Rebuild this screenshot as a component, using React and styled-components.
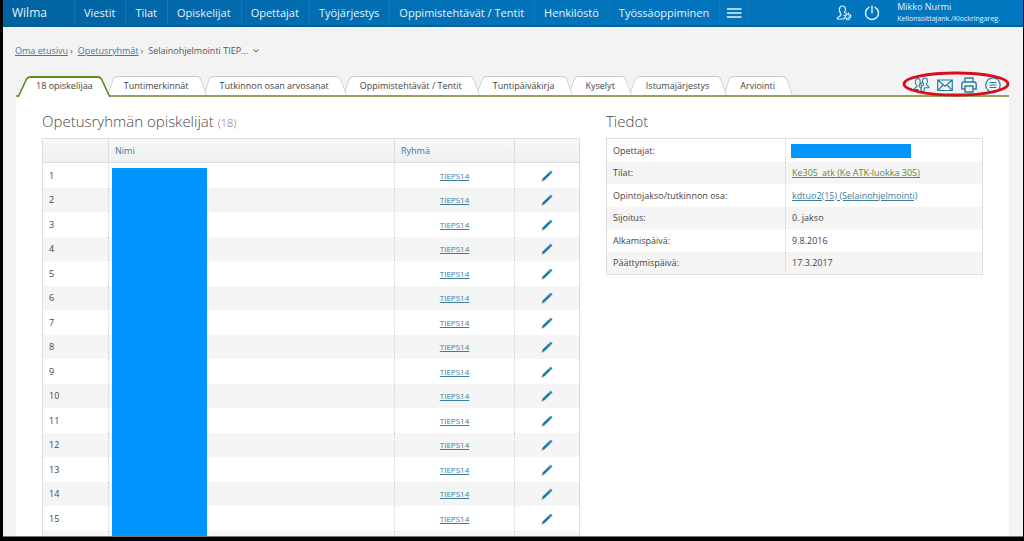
import React from "react";
import styled, { createGlobalStyle } from "styled-components";

const Global = createGlobalStyle`
  *, *::before, *::after { box-sizing: border-box; }
  body { margin: 0; background: #000; font-family: "Open Sans", "Liberation Sans", sans-serif; color: #555; font-size: 9px; line-height: 12px; }
  a { color: #3c7d9e; text-decoration: underline; }
`;

const Screen = styled.div`
  height: 100vh;
  padding: 0 1px 4px 3px;
  display: flex;
  flex-direction: column;
  background: #000;
`;

const Page = styled.div`
  flex: 1;
  min-height: 0;
  overflow: hidden;
  background: #f3f3f3;
  border-bottom: 1px solid #777;
`;

const TopBar = styled.header`
  display: flex;
  height: 27px;
  background: linear-gradient(90deg, #0262a0 0%, #0272b8 45%, #0077c0 100%);
  border-bottom: 2px solid #025f98;
  color: #e4f3fc;
`;

const Brand = styled.a`
  width: 72px;
  padding-left: 9px;
  font-size: 12px;
  line-height: 26px;
  && { color: inherit; text-decoration: none; }
  border-right: 1px solid #1272ae;
`;

const Nav = styled.nav`
  display: flex;
  flex: 1;
`;

const NavLink = styled.a`
  padding: 0 10px 0 9px;
  font-size: 11px;
  line-height: 26px;
  border-right: 1px solid #127abb;
  && { color: inherit; text-decoration: none; }
`;

const BarButton = styled.button`
  border: 0;
  background: none;
  color: inherit;
  padding: 0 6px;
  display: flex;
  align-items: center;
  border-right: ${(p) => (p.$ruled ? "1px solid #127abb" : "0")};
`;

const Session = styled.div`
  display: flex;
  padding-right: 23px;
`;

const User = styled.div`
  margin-left: 11px;
  padding-top: 1px;
  font-size: 9px;
  white-space: nowrap;
`;

const Role = styled.div`
  font-size: 7px;
`;

const Crumbs = styled.nav`
  display: flex;
  align-items: flex-start;
  gap: 2px;
  height: 49px;
  padding: 18px 12px 0;
  color: #555;
`;

const CrumbMark = styled.span`
  margin-right: 3px;
`;

const Crumb = styled.span`
  display: flex;
  align-items: center;
  gap: 5px;
`;

const Content = styled.main`
  margin: 0 14px 0 13px;
`;

const TabBar = styled.div`
  display: flex;
  height: 21px;
  border-bottom: 2px solid #8da561;
`;

const Tab = styled.button`
  position: relative;
  isolation: isolate;
  z-index: ${(p) => p.$layer};
  height: ${(p) => (p.$active ? 21 : 19)}px;
  margin: 0;
  padding: 1px 17px 0 ${(p) => (p.$active ? 20 : 14)}px;
  border: 0;
  background: none;
  font: inherit;
  line-height: 18px;
  color: #444;
  white-space: nowrap;
  display: flex;

  &::before, &::after {
    content: "";
    position: absolute;
    z-index: -1;
    top: 0;
    bottom: 0;
    background: #fff;
    border: ${(p) => (p.$active ? "2px solid #5f8f22" : "1px solid #c8c8c8")};
    border-bottom: 0;
  }
  &::before {
    left: ${(p) => (p.$active ? 1 : -3)}px;
    right: 20px;
    border-right: 0;
    border-top-left-radius: 4px;
    transform-origin: 0 100%;
    transform: skewX(${(p) => (p.$active ? -25 : -20)}deg);
  }
  &::after {
    right: -1px;
    left: 30px;
    border-left: 0;
    border-top-right-radius: 4px;
    transform-origin: 100% 100%;
    transform: skewX(${(p) => (p.$active ? 25 : 20)}deg);
  }
`;

const Tools = styled.div`
  position: relative;
  margin-left: auto;
  padding-right: 7px;
  display: flex;
  gap: 6px;
  color: #23819f;
`;

const Tool = styled.button`
  border: 0;
  padding: 0;
  background: none;
  color: inherit;
  width: 18px;
  height: 17px;
  display: flex;
  justify-content: center;
  align-items: center;
`;

const Highlight = styled.svg`
  position: absolute;
  right: -2px;
  top: -6px;
  pointer-events: none;
`;

const Panel = styled.div`
  background: #fff;
  padding: 14px 26px 0;
  display: grid;
  grid-template-columns: 538fr 377fr;
  column-gap: 26px;
  align-items: start;
`;

const Title = styled.h2`
  height: 20px;
  margin: 0 0 7px;
  font-size: 15px;
  line-height: 20px;
  font-weight: 300;
  color: #4a4a4a;
`;

const Count = styled.small`
  font-size: 11px;
  line-height: 12px;
  color: #777;
`;

const TableFrame = styled.div`
  position: relative;
`;

const Table = styled.table`
  width: 100%;
  table-layout: fixed;
  border-collapse: separate;
  border-spacing: 0;
  border: 1px solid #ddd;
  color: #444;

  th, td {
    padding: 0 6px;
    text-align: left;
    font-weight: 400;
    border-left: 1px dotted #d2d2d2;
  }
  th:first-child, td:first-child { border-left: 0; }
  tbody tr:nth-child(even) { background: #f5f5f5; }
`;

const StudentTable = styled(Table)`
  thead th {
    height: 24px;
    color: #3c78a0;
    background: linear-gradient(#f8f8f8, #efefef);
    border-bottom: 1px solid #ddd;
    border-left: 1px solid #ddd;
  }
  tbody td { height: 25px; }
  tbody tr:nth-child(even) td { height: 24px; }
`;

const InfoTable = styled(Table)`
  th, td { height: 23px; }
  tr:nth-child(even) th, tr:nth-child(even) td { height: 22px; }
`;

const Col = styled.col`
  width: ${(p) => p.$w}px;
`;

const Centered = styled.td`
  && { text-align: center; }
`;

const GroupLink = styled.a`
  font-size: 8px;
`;

const RoomLink = styled.a`
  && { color: #66882f; }
`;

const EditButton = styled.button`
  border: 0;
  padding: 0;
  background: none;
  color: #1878a8;
  display: block;
  margin: 0 auto;
`;

const NameCover = styled.div`
  position: absolute;
  left: 70px;
  top: 30px;
  bottom: 0;
  width: 95px;
  background: #0094ff;
`;

const TeacherCover = styled.div`
  width: 120px;
  height: 14px;
  margin-left: -1px;
  background: #0094ff;
`;

const Drawing = styled.svg`
  display: block;
  fill: none;
  stroke: currentColor;
  stroke-linecap: round;
  stroke-linejoin: round;
`;

const Svg = ({ w = 16, h = 16, box = "0 0 16 16", sw = 1.2, children }) => (
  <Drawing width={w} height={h} viewBox={box} strokeWidth={sw} aria-hidden="true">
    {children}
  </Drawing>
);

const navItems = ["Viestit", "Tilat", "Opiskelijat", "Opettajat", "Työjärjestys", "Oppimistehtävät / Tentit", "Henkilöstö", "Työssäoppiminen"];
const tabs = ["18 opiskelijaa", "Tuntimerkinnät", "Tutkinnon osan arvosanat", "Oppimistehtävät / Tentit", "Tuntipäiväkirja", "Kyselyt", "Istumajärjestys", "Arviointi"];
const students = Array.from({ length: 15 }, (_, i) => ({ no: i + 1, group: "TIEPS14" }));

export default function App() {
  return (
    <Screen>
      <Global />
      <Page>
        <TopBar>
          <Brand href="#">Wilma</Brand>
          <Nav aria-label="Päävalikko">
            {navItems.map((n) => <NavLink href="#" key={n}>{n}</NavLink>)}
            <BarButton $ruled aria-label="Valikko">
              <Svg sw={1.6}><path d="M1.500 4h13.500M1.500 8h13.500M1.500 12h13.500" /></Svg>
            </BarButton>
          </Nav>
          <Session>
            <BarButton aria-label="Asetukset">
              <Svg>
                <path d="M7.500 14H1.200c-.2-2.400 2.800-2.600 3.700-3.700.4-.6-.2-1.200-.5-2C3.500 6.300 3 3.800 4 2.200 5 .6 8 .6 9 2.200c.9 1.500.4 3.600-.4 5.400" />
                <circle cx="11.500" cy="11.500" r="3.200" strokeDasharray="1.500 1" strokeWidth="1.600" strokeLinecap="butt" />
                <circle cx="11.500" cy="11.500" r="2" strokeWidth="1" />
              </Svg>
            </BarButton>
            <BarButton aria-label="Kirjaudu ulos">
              <Svg sw={1.4}><path d="M8 1v7M5 2.300a6.500 6.500 0 1 0 6 0" /></Svg>
            </BarButton>
            <User>
              Mikko Nurmi
              <Role>Kellonsoittajank./Klockringareg.</Role>
            </User>
          </Session>
        </TopBar>
        <Crumbs aria-label="Murupolku">
          <Crumb><a href="#">Oma etusivu</a></Crumb>
          <CrumbMark>›</CrumbMark>
          <Crumb><a href="#">Opetusryhmät</a></Crumb>
          <CrumbMark>›</CrumbMark>
          <Crumb>
            Selainohjelmointi TIEP...
            <Svg w={6} h={4} box="0 0 6 4" sw={1}><path d="M.7.700 3 3 5.300.7" /></Svg>
          </Crumb>
        </Crumbs>
        <Content>
          <TabBar>
            {tabs.map((t, i) => <Tab key={t} $active={i === 0} $layer={tabs.length - i}>{t}</Tab>)}
            <Tools>
              <Tool aria-label="Ryhmä">
                <Svg w={17} sw={1.1}>
                  <path d="M.8 12.500c0-2 2.800-1.800 2.800-3.300C2 7.500 1.300 4 2.500 2.500 3.500 1 6 1.500 6.500 3c.5 2-.2 4.500-1 6 .2 1.500 1.700 1.500 2.200 2.500M8.700 9c1.300-.5 1.800-1.200 1.300-2C9 5.500 8.700 3 9.700 1.800c1-1.300 3.300-1 4 .4.600 1.500.2 3.300-.8 4.800-.2 1.700 2.500 1.400 2.500 3.700H11M4.500 12.500H1M8.500 5.500C7 6 7.200 8 8 9.300c.3 1.200-.8 1.700-.6 3.200.3 1.500 1 2.500 2.600 2.500.3-1.500 1-2.500 1-4.300" />
                </Svg>
              </Tool>
              <Tool aria-label="Viesti">
                <Svg><path d="M.7 3h14.600v10.500H.7zM.7 3 8 9.300 15.300 3M.9 13.300 6 8M15.100 13.300 10 8" /></Svg>
              </Tool>
              <Tool aria-label="Tulosta">
                <Svg sw={1.4}><path d="M4 5V1h8v4M4 12H.8V6.500L2 5h12l1.200 1.500V12H12M4 9h8v6H4z" /></Svg>
              </Tool>
              <Tool aria-label="Lisää">
                <Svg><circle cx="8" cy="8" r="7.200" /><path d="M5 5.500h6M5 8h6M5 10.500h6" /></Svg>
              </Tool>
              <Highlight width="110" height="28" viewBox="0 0 110 28" fill="none" aria-hidden="true">
                <ellipse cx="55" cy="14" rx="52" ry="11" stroke="#d3101c" strokeWidth="2.800" />
              </Highlight>
            </Tools>
          </TabBar>
          <Panel>
            <section>
              <Title>Opetusryhmän opiskelijat <Count>(18)</Count></Title>
              <TableFrame>
                <StudentTable>
                  <colgroup>
                    <Col $w={65} /><col /><Col $w={120} /><Col $w={65} />
                  </colgroup>
                  <thead>
                    <tr><th /><th>Nimi</th><th>Ryhmä</th><th /></tr>
                  </thead>
                  <tbody>
                    {students.map((s) => (
                      <tr key={s.no}>
                        <td>{s.no}</td>
                        <td />
                        <Centered><GroupLink href="#">{s.group}</GroupLink></Centered>
                        <Centered>
                          <EditButton aria-label={`Muokkaa ${s.no}`}>
                            <Svg w={12} h={12} box="0 0 12 12" sw={0.4}>
                              <path fill="currentColor" d="M1 11 1.800 8.400 8 2.500 9.700 4 3.500 10zM8.500 2 9.600 1 11.300 2.600 10.200 3.600z" />
                            </Svg>
                          </EditButton>
                        </Centered>
                      </tr>
                    ))}
                    <tr><td /><td /><td /><td /></tr>
                  </tbody>
                </StudentTable>
                <NameCover />
              </TableFrame>
            </section>
            <section>
              <Title>Tiedot</Title>
              <InfoTable>
                <colgroup><Col $w={178} /><col /></colgroup>
                <tbody>
                  <tr><th scope="row">Opettajat:</th><td><TeacherCover /></td></tr>
                  <tr><th scope="row">Tilat:</th><td><RoomLink href="#">Ke305_atk (Ke ATK-luokka 305)</RoomLink></td></tr>
                  <tr><th scope="row">Opintojakso/tutkinnon osa:</th><td><a href="#">kdtuo2(15) (Selainohjelmointi)</a></td></tr>
                  <tr><th scope="row">Sijoitus:</th><td>0. jakso</td></tr>
                  <tr><th scope="row">Alkamispäivä:</th><td>9.8.2016</td></tr>
                  <tr><th scope="row">Päättymispäivä:</th><td>17.3.2017</td></tr>
                </tbody>
              </InfoTable>
            </section>
          </Panel>
        </Content>
      </Page>
    </Screen>
  );
}
